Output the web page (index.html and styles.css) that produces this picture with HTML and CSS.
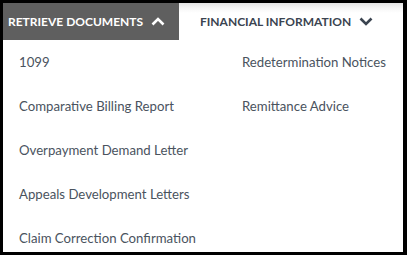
FILE: index.html
```html
<!DOCTYPE html>
<html>
<head>
<meta charset="utf-8">
<link rel="stylesheet" href="styles.css">
</head>
<body>
<div class="frame">
  <div class="tabs">
    <div class="tab active">
      <span>RETRIEVE DOCUMENTS</span>
      <svg class="chev" width="14" height="9" viewBox="0 0 14 9"><path d="M1.5 7.5 L7 2 L12.5 7.5" fill="none" stroke="#fff" stroke-width="2.6"/></svg>
    </div>
    <div class="tab">
      <span>FINANCIAL INFORMATION</span>
      <svg class="chev" width="14" height="9" viewBox="0 0 14 9"><path d="M1.5 1.5 L7 7 L12.5 1.5" fill="none" stroke="#3b4450" stroke-width="2.6"/></svg>
    </div>
  </div>
  <div class="menu">
    <ul class="col first">
      <li>1099</li>
      <li>Comparative Billing Report</li>
      <li>Overpayment Demand Letter</li>
      <li>Appeals Development Letters</li>
      <li>Claim Correction Confirmation</li>
    </ul>
    <ul class="col">
      <li>Redetermination Notices</li>
      <li>Remittance Advice</li>
    </ul>
  </div>
</div>
</body>
</html>
```
FILE: styles.css
```css
html, body { margin: 0; padding: 0; background: #000; }
.frame {
  box-sizing: border-box;
  width: 407px;
  height: 255px;
  border-top: 3px solid #000;
  border-left: 3px solid #000;
  border-right: 4px solid #000;
  border-bottom: 3px solid #000;
  background: #fff;
  overflow: hidden;
  font-family: Lato, "Open Sans", sans-serif;
}
.tabs {
  display: flex;
  height: 37px;
  background: linear-gradient(#e4e4e4 0px, #f6f6f6 5px, #fff 10px);
}
.tab {
  display: flex;
  align-items: center;
  gap: 8px;
  font-weight: bold;
  font-size: 12px;
  color: #3b4450;
  padding: 0 0 0 21px;
}
.tab.active {
  width: 176px;
  box-sizing: border-box;
  padding-left: 5px;
  background: #5f5f5f;
  color: #fff;
}
.chev { display: block; }
.menu {
  display: grid;
  grid-template-columns: 223px 1fr;
}
.col {
  list-style: none;
  margin: 0;
  padding: 0 0 0 16px;
}
.col li {
  height: 44px;
  line-height: 44px;
  font-size: 13.2px;
  color: #4a535e;
  white-space: nowrap;
}
```
